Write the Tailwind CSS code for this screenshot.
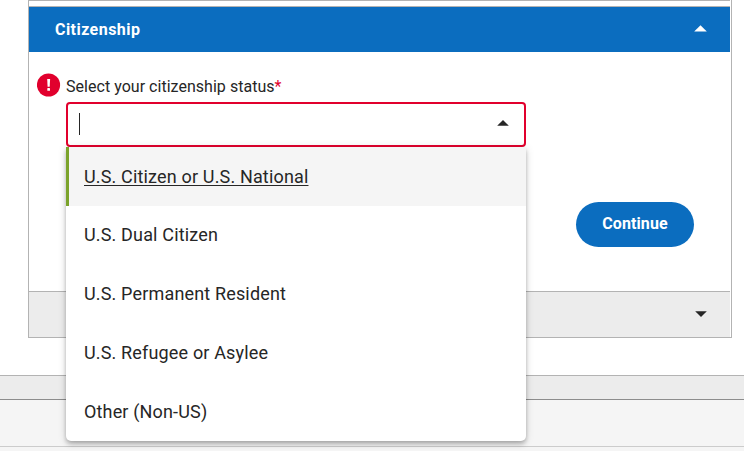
<!DOCTYPE html>
<html lang="en">
<head>
  <meta charset="UTF-8">
  <meta name="viewport" content="width=device-width, initial-scale=1.0">
  <title>Citizenship</title>
  <script src="https://cdn.jsdelivr.net/npm/@tailwindcss/browser@4"></script>
</head>
<body class="h-[451px] overflow-hidden bg-white font-['Roboto',sans-serif] text-[#262626]">

    <main class="ml-7 w-[704px] h-[338px] flex flex-col border-x border-b border-[#b3b3b3]">
        <!-- Bottom edge of the previous section -->
        <div class="mr-px h-[7px] border-y border-[#b3b3b3]"></div>

        <button class="mr-px h-[45px] pl-[26px] pr-[23px] flex shrink-0 items-center justify-between bg-[#0b6dbf] text-white">
            <span class="text-base font-bold tracking-[0.45px]">Citizenship</span>
            <svg class="w-[13px] h-[7px] -mt-0.5" viewBox="0 0 13 7" fill="currentColor"><path d="M0.2 6.6 6.5 0.2 12.8 6.6z"/></svg>
        </button>

        <div class="relative flex-1">
            <div class="flex items-center pl-2 pt-5">
                <svg class="w-6 h-6 -mt-px" viewBox="0 0 24 24">
                    <circle cx="11.5" cy="12" r="11.6" fill="#e1002d"/>
                    <path d="M10.2 6h2.9l-.4 7.8h-2.1z" fill="#fff"/>
                    <rect x="10.3" y="15.1" width="2.7" height="2.7" rx=".6" fill="#fff"/>
                </svg>
                <label for="citizenship" class="ml-[5px] mt-[3px] text-base leading-6 tracking-[0.03px]">Select your citizenship status<span class="text-[#e1002d]">*</span></label>
            </div>

            <div class="relative ml-[37px] mt-[3px] w-[460px]">
                <div id="citizenship" class="h-[45px] pl-[11px] pr-[15px] flex items-center justify-between rounded-[4px] border-2 border-[#e1002d] bg-white">
                    <span class="w-px h-[22px] -mt-0.5 bg-[#262626]"></span>
                    <svg class="w-3 h-1.5 -mt-[3px]" viewBox="0 0 12 6" fill="currentColor"><path d="M0.2 5.7 6 0 11.8 5.7z"/></svg>
                </div>

                <!-- Options -->
                <ul class="absolute z-10 top-full left-0 w-full h-[294px] grid grid-rows-5 overflow-hidden rounded-b-[5px] bg-white text-lg tracking-[0.16px] shadow-[0_2px_4px_-1px_rgba(0,0,0,0.2),0_4px_5px_0_rgba(0,0,0,0.14),0_1px_10px_0_rgba(0,0,0,0.12)]">
                    <li class="flex items-center border-l-3 border-[#7ba32b] bg-[#f5f5f5] pl-[15px] pt-px"><span class="underline underline-offset-2">U.S. Citizen or U.S. National</span></li>
                    <li class="flex items-center pl-[18px]">U.S. Dual Citizen</li>
                    <li class="flex items-center pl-[18px]">U.S. Permanent Resident</li>
                    <li class="flex items-center pl-[18px]">U.S. Refugee or Asylee</li>
                    <li class="flex items-center pl-[18px]">Other (Non-US)</li>
                </ul>
            </div>

            <div class="mt-[55px] mr-[37px] flex justify-end">
                <button class="w-[118px] h-[45px] rounded-full bg-[#0b6dbf] pb-0.5 text-base font-bold tracking-[0.1px] text-white">Continue</button>
            </div>
        </div>

        <button class="mr-px h-[46px] pr-[23px] flex shrink-0 items-center justify-end border-t border-[#b3b3b3] bg-[#ececec]">
            <svg class="w-3 h-1.5 -mt-px" viewBox="0 0 12 6" fill="currentColor"><path d="M0.2 0.3 6 6 11.8 0.3z"/></svg>
        </button>
    </main>

    <footer class="mt-[37px] bg-[#f5f5f5]">
        <div class="h-[25px] border-t border-t-[#b3b3b3] border-b border-b-[#8c8c8c] bg-[#ececec]"></div>
        <div class="h-[47px] border-b border-[#cccccc]"></div>
        <div class="h-1"></div>
    </footer>

</body>
</html>
